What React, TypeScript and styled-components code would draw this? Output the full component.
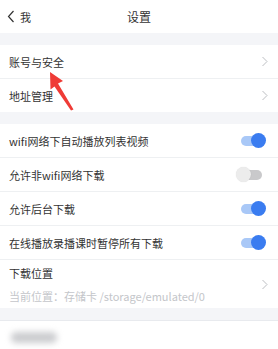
import React from 'react';
import styled, { createGlobalStyle } from 'styled-components';

const GlobalStyle = createGlobalStyle`
  html, body {
    margin: 0;
    padding: 0;
    background: #f4f5f8;
  }
  body {
    font-family: "Noto Sans CJK SC", "Noto Sans", sans-serif;
    color: #333;
  }
`;

const Page = styled.div`
  position: relative;
  width: 278px;
  height: 349px;
  overflow: hidden;
  background: #f4f5f8;
`;

const Header = styled.div`
  height: 33px;
  background: #fff;
  display: flex;
  align-items: center;
  position: relative;
  padding-left: 7px;
`;

const Back = styled.div`
  display: flex;
  align-items: center;
  gap: 5px;
  font-size: 11px;
  color: #333;
`;

const Title = styled.div`
  position: absolute;
  left: 0;
  right: 0;
  text-align: center;
  font-size: 12px;
  color: #333;
  pointer-events: none;
`;

const Gap = styled.div<{ $line?: boolean }>`
  height: 12px;
  border-bottom: ${(p) => (p.$line ? '1px solid #e8eaee' : 'none')};
`;

const Group = styled.div`
  background: #fff;
`;

const Row = styled.div<{ $tall?: boolean; $last?: boolean }>`
  height: ${(p) => (p.$tall ? '48px' : '33px')};
  display: flex;
  align-items: center;
  justify-content: space-between;
  padding: 0 9px;
  border-bottom: ${(p) => (p.$last ? 'none' : '1px solid #eef0f2')};
`;

const Label = styled.div`
  font-size: 11px;
  color: #333;
`;

const TextStack = styled.div`
  display: flex;
  flex-direction: column;
  gap: 7px;
`;

const Sub = styled.div`
  font-size: 11px;
  color: #c4c6ca;
`;

const Chevron = () => (
  <svg width="8" height="11" viewBox="0 0 8 11">
    <path d="M1.5 1 L6 5.5 L1.5 10" fill="none" stroke="#bdbfc3" strokeWidth="1" />
  </svg>
);

const ToggleWrap = styled.div`
  position: relative;
  width: 30px;
  height: 15px;
  margin-right: 3px;
`;

const Track = styled.div<{ $on: boolean }>`
  position: absolute;
  left: 5px;
  right: 4px;
  top: 2.5px;
  height: 10px;
  border-radius: 5px;
  background: ${(p) => (p.$on ? '#a9c8f7' : '#c9c9cb')};
`;

const Knob = styled.div<{ $on: boolean }>`
  position: absolute;
  top: 0;
  width: 15px;
  height: 15px;
  border-radius: 50%;
  left: ${(p) => (p.$on ? '15px' : '0')};
  background: ${(p) => (p.$on ? '#3a7cf0' : '#ececec')};
  box-shadow: ${(p) => (p.$on ? 'none' : '0 0 1px rgba(0,0,0,0.15)')};
`;

const Toggle = ({ on }: { on: boolean }) => (
  <ToggleWrap>
    <Track $on={on} />
    <Knob $on={on} />
  </ToggleWrap>
);

const Blurred = styled.div`
  width: 46px;
  height: 11px;
  border-radius: 5px;
  background: #cbcccf;
  filter: blur(3px);
  margin-left: 2px;
`;

const Arrow = styled.svg`
  position: absolute;
  left: 40px;
  top: 70px;
`;

const toggles = [
  { label: 'wifi网络下自动播放列表视频', on: true },
  { label: '允许非wifi网络下载', on: false },
  { label: '允许后台下载', on: true },
  { label: '在线播放录播课时暂停所有下载', on: true },
];

export default function App() {
  return (
    <Page>
      <GlobalStyle />
      <Header>
        <Back>
          <svg width="8" height="13" viewBox="0 0 8 13">
            <path d="M6.5 1 L1.5 6.5 L6.5 12" fill="none" stroke="#333" strokeWidth="1.2" />
          </svg>
          <span>我</span>
        </Back>
        <Title>设置</Title>
      </Header>
      <Gap />
      <Group>
        <Row>
          <Label>账号与安全</Label>
          <Chevron />
        </Row>
        <Row $last>
          <Label>地址管理</Label>
          <Chevron />
        </Row>
      </Group>
      <Gap />
      <Group>
        {toggles.map((t) => (
          <Row key={t.label}>
            <Label>{t.label}</Label>
            <Toggle on={t.on} />
          </Row>
        ))}
        <Row $tall $last>
          <TextStack>
            <Label>下载位置</Label>
            <Sub>当前位置：存储卡 /storage/emulated/0</Sub>
          </TextStack>
          <Chevron />
        </Row>
      </Group>
      <Gap $line />
      <Group>
        <Row $last>
          <Blurred />
        </Row>
      </Group>
      <Arrow width="36" height="44" viewBox="0 0 36 44">
        <polygon
          points="10,2 10.5,19.5 14.5,16.5 31,40.5 33.5,39.5 18,13.5 23,11"
          fill="#ef3b36"
        />
      </Arrow>
    </Page>
  );
}
